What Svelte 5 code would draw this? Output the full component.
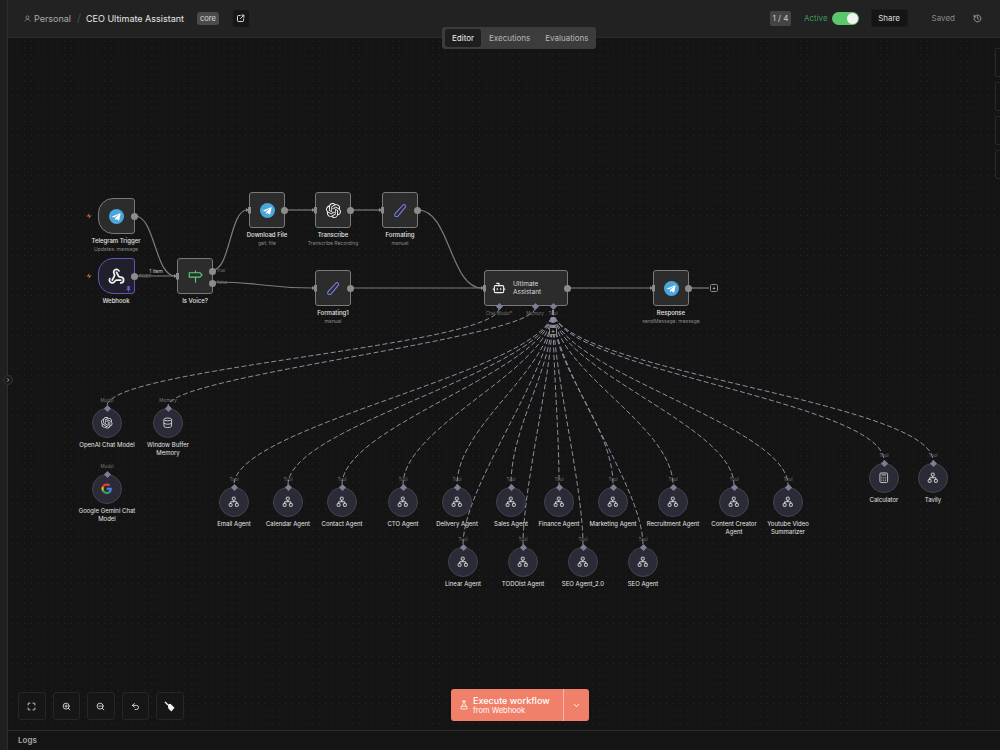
<script>
  // page coordinates of the canvas origin
  const ox = 8;
  const oy = 38;

  const squares = [
    { x: 249, y: 192, name: "Download File", sub: "get: file", icon: "telegram" },
    { x: 315, y: 192, name: "Transcribe", sub: "Transcribe Recording", icon: "openai" },
    { x: 382, y: 192, name: "Formating", sub: "manual", icon: "pen" },
    { x: 177, y: 258, name: "Is Voice?", sub: "", icon: "sign" },
    { x: 315, y: 270, name: "Formating1", sub: "manual", icon: "pen" },
    { x: 653, y: 270, name: "Response", sub: "sendMessage: message", icon: "telegram" },
  ];

  const circles = [
    { x: 107, y: 423, name: "OpenAI Chat Model", port: "Model", icon: "openai" },
    { x: 168, y: 423, name: "Window Buffer Memory", port: "Memory", icon: "db" },
    { x: 107, y: 489, name: "Google Gemini Chat Model", port: "Model", icon: "google" },
    { x: 234, y: 502, name: "Email Agent" },
    { x: 288, y: 502, name: "Calendar Agent" },
    { x: 342, y: 502, name: "Contact Agent" },
    { x: 403, y: 502, name: "CTO Agent" },
    { x: 457, y: 502, name: "Delivery Agent" },
    { x: 511, y: 502, name: "Sales Agent" },
    { x: 559, y: 502, name: "Finance Agent" },
    { x: 613, y: 502, name: "Marketing Agent" },
    { x: 673, y: 502, name: "Recruitment Agent" },
    { x: 734, y: 502, name: "Content Creator Agent" },
    { x: 788, y: 502, name: "Youtube Video Summarizer" },
    { x: 884, y: 478, name: "Calculator", icon: "calc" },
    { x: 933, y: 478, name: "Tavily" },
    { x: 463, y: 562, name: "Linear Agent" },
    { x: 523, y: 562, name: "TODOist Agent" },
    { x: 583, y: 562, name: "SEO Agent_2.0" },
    { x: 643, y: 562, name: "SEO Agent" },
  ];

  // main flow, horizontal beziers
  const links = [
    [135, 216, 175, 276],
    [135, 276, 175, 276],
    [213, 270, 247, 210],
    [213, 282, 313, 288],
    [285, 210, 313, 210],
    [351, 210, 380, 210],
    [418, 210, 482, 288],
    [351, 288, 482, 288],
    [568, 288, 651, 288],
    [689, 288, 709, 288],
  ];

  function hcurve([x1, y1, x2, y2]) {
    const k = Math.max(Math.abs(x2 - x1) * 0.5, 8);
    return `M${x1 - ox} ${y1 - oy}C${x1 + k - ox} ${y1 - oy} ${x2 - k - ox} ${y2 - oy} ${x2 - ox} ${y2 - oy}`;
  }

  function vcurve(x1, y1, x2, y2, k) {
    return `M${x1 - ox} ${y1 - oy}C${x1 - ox} ${y1 + k - oy} ${x2 - ox} ${y2 - k - oy} ${x2 - ox} ${y2 - oy}`;
  }

  const dashed = [
    vcurve(499, 308, 107, 406, 38),
    vcurve(535, 308, 168, 406, 30),
    ...circles.slice(3).map((c) => vcurve(553, 310, c.x, c.y - 17, 60)),
  ];

  const pos = (x, y) => `left:${x - ox}px;top:${y - oy}px`;
</script>

{#snippet icon(kind)}
  {#if kind === "telegram"}
    <svg viewBox="0 0 24 24" class="ic-lg">
      <circle cx="12" cy="12" r="12" fill="#4ba6dc" />
      <path d="M5 11.800 17.600 6.800c.6-.2 1.100.1.900.9l-2.100 10c-.2.7-.6.9-1.200.5l-3.200-2.400-1.600 1.500c-.2.2-.3.3-.7.3l.2-3.300 6-5.400c.3-.2-.1-.4-.4-.2l-7.400 4.700-3.200-1c-.7-.2-.7-.7.1-1z" fill="#fff" />
    </svg>
  {:else if kind === "openai"}
    <svg viewBox="0 0 24 24" class="ic-lg" fill="currentColor">
      <path d="M22.2819 9.8211a5.9847 5.9847 0 0 0-.5157-4.9108 6.0462 6.0462 0 0 0-6.5098-2.9A6.0651 6.0651 0 0 0 4.9807 4.1818a5.9847 5.9847 0 0 0-3.9977 2.9 6.0462 6.0462 0 0 0 .7427 7.0966 5.98 5.98 0 0 0 .511 4.9107 6.051 6.051 0 0 0 6.5146 2.9001A5.9847 5.9847 0 0 0 13.2599 24a6.0557 6.0557 0 0 0 5.7718-4.2058 5.9894 5.9894 0 0 0 3.9977-2.9001 6.0557 6.0557 0 0 0-.7475-7.0729zm-9.022 12.6081a4.4755 4.4755 0 0 1-2.8764-1.0408l.1419-.0804 4.7783-2.7582a.7948.7948 0 0 0 .3927-.6813v-6.7369l2.02 1.1686a.071.071 0 0 1 .038.052v5.5826a4.504 4.504 0 0 1-4.4945 4.4944zm-9.6607-4.1254a4.4708 4.4708 0 0 1-.5346-3.0137l.142.0852 4.783 2.7582a.7712.7712 0 0 0 .7806 0l5.8428-3.3685v2.3324a.0804.0804 0 0 1-.0332.0615L9.74 19.9502a4.4992 4.4992 0 0 1-6.1408-1.6464zM2.3408 7.8956a4.485 4.485 0 0 1 2.3655-1.9728V11.6a.7664.7664 0 0 0 .3879.6765l5.8144 3.3543-2.0201 1.1685a.0757.0757 0 0 1-.071 0l-4.8303-2.7865A4.504 4.504 0 0 1 2.3408 7.872zm16.5963 3.8558L13.1038 8.364 15.1192 7.2a.0757.0757 0 0 1 .071 0l4.8303 2.7913a4.4944 4.4944 0 0 1-.6765 8.1042v-5.6772a.79.79 0 0 0-.407-.667zm2.0107-3.0231l-.142-.0852-4.7735-2.7818a.7759.7759 0 0 0-.7854 0L9.409 9.2297V6.8974a.0662.0662 0 0 1 .0284-.0615l4.8303-2.7866a4.4992 4.4992 0 0 1 6.6802 4.66zM8.3065 12.863l-2.02-1.1638a.0804.0804 0 0 1-.038-.0567V6.0742a4.4992 4.4992 0 0 1 7.3757-3.4537l-.142.0805L8.704 5.459a.7948.7948 0 0 0-.3927.6813zm1.0976-2.3654l2.602-1.4998 2.6069 1.4998v2.9994l-2.5974 1.4997-2.6067-1.4997Z" />
    </svg>
  {:else if kind === "pen"}
    <svg viewBox="0 0 24 24" class="ic-lg" fill="none" stroke="#7a80e8" stroke-width="1.700" stroke-linejoin="round">
      <path d="M16.500 2.800c1.500-1 4.700 1.700 3.600 3.400L8 21c-1.400 1.200-4.500.8-5-.4-.5-1.100-.2-3 .7-4z" />
    </svg>
  {:else if kind === "sign"}
    <svg viewBox="0 0 24 24" class="ic-lg" fill="none" stroke="#55d17a" stroke-width="1.800" stroke-linejoin="round">
      <path d="M2 6h17l3.500 3.500L19 13H2z" />
      <path d="M12 2.500V6M12 13v9" />
    </svg>
  {:else if kind === "webhook"}
    <svg viewBox="0 0 24 24" class="ic-lg hook" fill="none" stroke="#f2f2f2" stroke-width="2.500" stroke-linecap="round" stroke-linejoin="round">
      <path d="M18 16.980h-5.990c-1.100 0-1.950.94-2.480 1.900A4 4 0 0 1 2 17c.01-.7.2-1.400.57-2" />
      <path d="m6 17 3.130-5.780c.53-.97.1-2.180-.5-3.100a4 4 0 1 1 6.890-4.060" />
      <path d="m12 6 3.130 5.730C15.660 12.700 16.900 13 18 13a4 4 0 0 1 0 8" />
    </svg>
  {:else if kind === "db"}
    <svg viewBox="0 0 24 24" class="ic-md" fill="none" stroke="currentColor" stroke-width="1.700">
      <ellipse cx="12" cy="5" rx="8" ry="3" />
      <path d="M4 5v14c0 1.700 3.600 3 8 3s8-1.300 8-3V5M4 12c0 1.700 3.600 3 8 3s8-1.300 8-3" />
    </svg>
  {:else if kind === "google"}
    <svg viewBox="0 0 24 24" class="ic-md">
      <path d="M22.500 12.300c0-.8-.1-1.500-.2-2.200H12v4.200h5.900c-.3 1.400-1 2.500-2.200 3.300v2.700h3.500c2.100-1.900 3.300-4.700 3.300-8z" fill="#4285f4" />
      <path d="M12 23c3 0 5.400-1 7.200-2.700l-3.500-2.700c-1 .7-2.200 1-3.700 1-2.900 0-5.300-1.900-6.200-4.500H2.200v2.800C4 20.500 7.700 23 12 23z" fill="#34a853" />
      <path d="M5.800 14.100c-.2-.7-.3-1.400-.3-2.100s.1-1.400.3-2.100V7.100H2.200C1.400 8.500 1 10.200 1 12s.4 3.500 1.200 4.900z" fill="#fbbc05" />
      <path d="M12 5.400c1.600 0 3 .5 4.200 1.600l3.100-3.100C17.400 2.100 15 1 12 1 7.700 1 4 3.500 2.200 7.100l3.600 2.800C6.700 7.300 9.100 5.400 12 5.400z" fill="#ea4335" />
    </svg>
  {:else if kind === "calc"}
    <svg viewBox="0 0 24 24" class="ic-md" fill="none" stroke="currentColor" stroke-width="1.700">
      <rect x="4" y="2" width="16" height="20" rx="2.500" />
      <path d="M8 6h8M8 11h.01M12 11h.01M16 11h.01M8 14.500h.01M12 14.500h.01M16 14.500h.01M8 18h.01M12 18h.01M16 18h.01" stroke-linecap="round" />
    </svg>
  {:else}
    <svg viewBox="0 0 24 24" class="ic-md" fill="none" stroke="currentColor" stroke-width="1.800" stroke-linejoin="round">
      <rect x="9" y="2.500" width="6" height="6" rx="1" />
      <rect x="2.500" y="15.500" width="6" height="6" rx="1" />
      <rect x="15.500" y="15.500" width="6" height="6" rx="1" />
      <path d="M12 8.500V12M5.500 15.500V12h13v3.500" />
    </svg>
  {/if}
{/snippet}

<div class="app">
  <aside class="rail"></aside>
  <button class="collapse" aria-label="Expand sidebar">
    <svg viewBox="0 0 10 10"><path d="M4 3l2 2-2 2" fill="none" stroke="currentColor" stroke-width="1" /></svg>
  </button>

  <div class="main">
    <header class="top">
      <div class="crumbs">
        <svg class="user" viewBox="0 0 24 24" fill="none" stroke="currentColor" stroke-width="2.500"><circle cx="12" cy="8" r="5" /><path d="M3 22c1-5 4.500-7 9-7s8 2 9 7" /></svg>
        <span class="personal">Personal</span>
        <span class="slash">/</span>
        <span class="title">CEO Ultimate Assistant</span>
        <span class="tag">core</span>
        <button class="add-tag" aria-label="Open in new tab">
          <svg viewBox="0 0 24 24" fill="none" stroke="currentColor" stroke-width="2.600" stroke-linecap="round" stroke-linejoin="round"><path d="M11 4H6a2 2 0 0 0-2 2v12a2 2 0 0 0 2 2h12a2 2 0 0 0 2-2v-5" /><path d="M15 3h6v6M21 3l-9 9" /></svg>
        </button>
      </div>
      <div class="actions">
        <span class="pager">1 / 4</span>
        <span class="active">Active</span>
        <span class="toggle"><span class="knob"></span></span>
        <button class="share">Share</button>
        <span class="saved">Saved</span>
        <svg class="history" viewBox="0 0 24 24" fill="none" stroke="currentColor" stroke-width="2.200" stroke-linecap="round" stroke-linejoin="round"><path d="M3 12a9 9 0 1 0 3-6.700L3 8" /><path d="M3 3v5h5M12 7v5l3.500 2" /></svg>
      </div>
    </header>

    <div class="canvas">
      <div class="tabs">
        <span class="tab on">Editor</span>
        <span class="tab">Executions</span>
        <span class="tab">Evaluations</span>
      </div>

      <div class="edge-boxes">
        <span></span>
        <span></span>
        <span></span>
        <span></span>
      </div>

      <svg class="wires" width="992" height="692">
        {#each dashed as d}
          <path {d} class="dash" />
        {/each}
        {#each links as l}
          <path d={hcurve(l)} class="wire" />
        {/each}
      </svg>

      <!-- triggers -->
      <div class="node trigger" style={pos(98, 198)}>
        {@render icon("telegram")}
        <span class="out"></span>
      </div>
      <div class="label" style={pos(116, 237)}>
        <b>Telegram Trigger</b>
        <small>Updates: message</small>
      </div>
      <svg class="bolt" style={pos(86, 212)} viewBox="0 0 10 10"><path d="M6 0 4.500 4H9L4 10l1.500-4H1z" fill="#e8654f" /></svg>

      <div class="node trigger pinned" style={pos(98, 258)}>
        {@render icon("webhook")}
        <span class="out"></span>
        <svg class="pin" viewBox="0 0 10 12"><path d="M2.500 0h5v1.500L7 5l2 2v1H5.700v4h-1.400V8H1V7l2-2-.5-3.500z" fill="#6f5ee0" /></svg>
      </div>
      <div class="label" style={pos(116, 297)}><b>Webhook</b></div>
      <svg class="bolt" style={pos(86, 272)} viewBox="0 0 10 10"><path d="M6 0 4.500 4H9L4 10l1.500-4H1z" fill="#e8654f" /></svg>

      <span class="wire-note" style={pos(156, 268)}>1 item</span>
      <span class="port-note" style={pos(139, 274)}>POST</span>

      {#each squares as n}
        <div class="node" style={pos(n.x, n.y)}>
          {@render icon(n.icon)}
          <span class="in"></span>
          {#if n.name === "Is Voice?"}
            <span class="out t"></span>
            <span class="out f"></span>
          {:else}
            <span class="out"></span>
          {/if}
        </div>
        <div class="label" style={pos(n.x + 18, n.y + 39)}>
          <b>{n.name}</b>
          {#if n.sub}<small>{n.sub}</small>{/if}
        </div>
      {/each}

      <span class="port-note" style={pos(217, 268)}>true</span>
      <span class="port-note" style={pos(217, 280)}>false</span>

      <!-- agent -->
      <div class="node agent" style={pos(484, 270)}>
        <svg class="robot" viewBox="0 0 24 24" fill="none" stroke="#f2f2f2" stroke-width="1.900" stroke-linecap="round" stroke-linejoin="round">
          <path d="M12 8V4H8" />
          <rect x="4" y="8" width="16" height="12" rx="2" />
          <path d="M2 14h2M20 14h2M15 13v2M9 13v2" />
        </svg>
        <span class="agent-name">Ultimate<br />Assistant</span>
        <span class="in"></span>
        <span class="out"></span>
      </div>
      <span class="diamond" style={pos(499, 306)}></span>
      <span class="diamond" style={pos(535, 306)}></span>
      <span class="diamond" style={pos(553, 306)}></span>
      <span class="sub-port" style={pos(499, 313)}>Chat Model<i>*</i></span>
      <span class="sub-port" style={pos(535, 313)}>Memory</span>
      <span class="sub-port" style={pos(553, 313)}>Tool</span>
      <span class="plus" style={pos(553, 331)}>+</span>
      <span class="plus" style={pos(714, 288)}>+</span>

      {#each circles as c}
        <span class="sub-port" style={pos(c.x, c.y - 23)}>{c.port ?? "Tool"}</span>
        <div class="round" style={pos(c.x - 15, c.y - 15)}>
          {@render icon(c.icon ?? "agent")}
        </div>
        <span class="diamond" style={pos(c.x, c.y - 15)}></span>
        <div class="label round-label" style={pos(c.x, c.y + 18)}>{c.name}</div>
      {/each}

      <!-- zoom tools -->
      <div class="tools">
        <button aria-label="Fit view">
          <svg viewBox="0 0 24 24" fill="none" stroke="currentColor" stroke-width="2.400" stroke-linecap="round"><path d="M3 8V5a2 2 0 0 1 2-2h3M16 3h3a2 2 0 0 1 2 2v3M21 16v3a2 2 0 0 1-2 2h-3M8 21H5a2 2 0 0 1-2-2v-3" /></svg>
        </button>
        <button aria-label="Zoom in">
          <svg viewBox="0 0 24 24" fill="none" stroke="currentColor" stroke-width="2.400" stroke-linecap="round"><circle cx="11" cy="11" r="8" /><path d="m21 21-4.300-4.300M11 8v6M8 11h6" /></svg>
        </button>
        <button aria-label="Zoom out">
          <svg viewBox="0 0 24 24" fill="none" stroke="currentColor" stroke-width="2.400" stroke-linecap="round"><circle cx="11" cy="11" r="8" /><path d="m21 21-4.300-4.300M8 11h6" /></svg>
        </button>
        <button aria-label="Undo">
          <svg viewBox="0 0 24 24" fill="none" stroke="currentColor" stroke-width="2.400" stroke-linecap="round" stroke-linejoin="round"><path d="M9 14 4 9l5-5" /><path d="M4 9h10.500a5.500 5.500 0 0 1 0 11H11" /></svg>
        </button>
        <button class="broom" aria-label="Tidy up">
          <svg viewBox="0 0 24 24" fill="#f2f2f2"><path d="M1 2.500 3.500 1l6 6.500-2.500 2zM8 7.500l6-1.500 9 8.500-7 8.500-6.500-6.500z" /></svg>
        </button>
      </div>

      <div class="run">
        <button class="run-main">
          <svg viewBox="0 0 24 24" fill="none" stroke="currentColor" stroke-width="2" stroke-linecap="round" stroke-linejoin="round"><path d="M9 2.500h6M10 2.500V9l-5.500 9.500A2 2 0 0 0 6.200 21.500h11.600a2 2 0 0 0 1.700-3L14 9V2.500M7.500 15h9" /></svg>
          <span class="run-text"><b>Execute workflow</b><small>from Webhook</small></span>
        </button>
        <button class="run-more" aria-label="More">
          <svg viewBox="0 0 24 24" fill="none" stroke="currentColor" stroke-width="2.600" stroke-linecap="round" stroke-linejoin="round"><path d="m6 9 6 6 6-6" /></svg>
        </button>
      </div>
    </div>

    <footer class="logs">Logs</footer>
  </div>
</div>

<style>
  :global(body) {
    margin: 0;
    background: #141414;
    font-family: Inter, "Liberation Sans", sans-serif;
  }

  button {
    font-family: inherit;
    padding: 0;
    cursor: pointer;
  }

  .app {
    position: relative;
    display: flex;
    width: 1000px;
    height: 750px;
    overflow: hidden;
    color: #e8e8e8;
  }

  .rail {
    width: 7px;
    flex: none;
    background: #1f1f1f;
    border-right: 1px solid #2c2c2c;
  }

  .collapse {
    position: absolute;
    left: 3px;
    top: 375px;
    z-index: 3;
    width: 10px;
    height: 10px;
    border: 1px solid #333;
    border-radius: 50%;
    background: #1c1c1c;
    color: #bbb;
    box-sizing: border-box;
    display: flex;
  }

  .collapse svg {
    width: 100%;
    height: 100%;
  }

  .main {
    flex: 1;
    display: flex;
    flex-direction: column;
    min-width: 0;
  }

  .top {
    height: 38px;
    flex: none;
    display: flex;
    align-items: center;
    justify-content: space-between;
    background: #222;
    border-bottom: 1px solid #2c2c2c;
    padding: 0 18px 1px 16px;
    box-sizing: border-box;
  }

  .crumbs,
  .actions {
    display: flex;
    align-items: center;
  }

  .user {
    width: 7px;
    height: 7px;
    color: #999;
    margin-right: 3px;
  }

  .personal {
    font-size: 9px;
    color: #aaa;
  }

  .slash {
    margin: 0 5px 0 6px;
    font-size: 11px;
    color: #4a4a4a;
  }

  .title {
    font-size: 9px;
    font-weight: 400;
    color: #e6e6e6;
  }

  .tag {
    margin-left: 13px;
    padding: 2px 3px;
    border-radius: 3px;
    background: #4a4a4a;
    color: #ddd;
    font-size: 7.500px;
    line-height: 9px;
  }

  .add-tag {
    margin-left: 14px;
    width: 16px;
    height: 17px;
    border: 0;
    border-radius: 3px;
    background: #161616;
    color: #ddd;
    display: flex;
    align-items: center;
    justify-content: center;
  }

  .add-tag svg {
    width: 9px;
    height: 9px;
  }

  .pager {
    width: 21px;
    height: 15px;
    line-height: 15px;
    text-align: center;
    border-radius: 2px;
    background: #444;
    color: #ccc;
    font-size: 8px;
    font-weight: 400;
  }

  .active {
    margin-left: 13px;
    font-size: 8px;
    font-weight: 400;
    color: #3f9a55;
  }

  .toggle {
    margin-left: 4px;
    width: 27px;
    height: 13px;
    border-radius: 7px;
    background: #5cc66d;
    display: flex;
    justify-content: flex-end;
    align-items: center;
    padding: 0 1px;
    box-sizing: border-box;
  }

  .knob {
    width: 11px;
    height: 11px;
    border-radius: 50%;
    background: #f2f2f2;
  }

  .share {
    margin-left: 12px;
    width: 37px;
    height: 18px;
    border: 1px solid #1b1b1b;
    border-radius: 2px;
    background: #151515;
    color: #ddd;
    font-size: 8px;
    font-weight: 400;
  }

  .saved {
    margin-left: 24px;
    font-size: 8px;
    font-weight: 400;
    color: #888;
  }

  .history {
    margin-left: 18px;
    width: 9px;
    height: 9px;
    color: #aaa;
  }

  .canvas {
    position: relative;
    flex: 1;
    min-height: 0;
    background-color: #141414;
    background-image: radial-gradient(circle, #2b2b2b 0.55px, transparent 0.8px);
    background-size: 6.7px 6.7px;
  }

  .tabs {
    position: absolute;
    top: -11px;
    left: 434px;
    z-index: 2;
    display: flex;
    gap: 1px;
    height: 22px;
    padding: 2px 1px 2px 3px;
    box-sizing: border-box;
    border-radius: 3px;
    background: #3c3c3c;
  }

  .tab {
    padding: 0 7px;
    font-size: 8px;
    line-height: 18px;
    color: #b8b8b8;
    font-weight: 400;
  }

  .tab.on {
    background: #1e1e1e;
    border-radius: 3px;
    color: #eee;
  }

  .edge-boxes {
    position: absolute;
    right: -6px;
    top: 10px;
    display: flex;
    flex-direction: column;
    gap: 5px;
  }

  .edge-boxes span {
    width: 9px;
    height: 27px;
    border: 1px solid #282828;
    border-radius: 2px;
  }

  .wires {
    position: absolute;
    left: 0;
    top: 0;
    pointer-events: none;
  }

  .wire {
    fill: none;
    stroke: #7c7c7c;
    stroke-width: 1.200;
  }

  .dash {
    fill: none;
    stroke: #8e8ea2;
    stroke-width: 1;
    stroke-dasharray: 5 2.500;
  }

  .node {
    position: absolute;
    width: 36px;
    height: 36px;
    box-sizing: border-box;
    border: 1px solid #7a7a7a;
    border-radius: 3px;
    background: #2c2c2c;
    color: #f2f2f2;
    display: flex;
    align-items: center;
    justify-content: center;
  }

  .trigger {
    width: 37px;
    border-radius: 15px 3px 3px 15px;
  }

  .pinned {
    border-color: #6155b8;
    background: #20202c;
  }

  .in {
    position: absolute;
    left: -4px;
    top: 50%;
    width: 5px;
    height: 7px;
    margin-top: -3.500px;
    background: #8a8a8a;
    clip-path: polygon(0 20%, 40% 40%, 40% 0, 100% 0, 100% 100%, 40% 100%, 40% 60%, 0 80%);
  }

  .out {
    position: absolute;
    right: -4px;
    top: 50%;
    width: 7px;
    height: 7px;
    margin-top: -3.500px;
    border-radius: 50%;
    background: #8c8c8c;
  }

  .out.t {
    top: 12px;
  }

  .out.f {
    top: 24px;
  }

  .pin {
    position: absolute;
    right: 3px;
    bottom: 1px;
    width: 5px;
    height: 6px;
  }

  .bolt {
    position: absolute;
    width: 6px;
    height: 8px;
  }

  .ic-lg {
    width: 15px;
    height: 15px;
  }

  .ic-lg.hook {
    width: 17px;
    height: 17px;
  }

  .ic-md {
    width: 11px;
    height: 11px;
    color: #e8e8e8;
  }

  .label {
    position: absolute;
    width: 64px;
    margin-left: -32px;
    display: flex;
    flex-direction: column;
    align-items: center;
    text-align: center;
    color: #e4e4e4;
    font-size: 6px;
    line-height: 8px;
  }

  .label b {
    font-weight: 500;
    white-space: nowrap;
  }

  .label small {
    margin-top: 1px;
    font-size: 5px;
    line-height: 7px;
    color: #8a8a8a;
    white-space: nowrap;
  }

  .round-label {
    width: 60px;
    margin-left: -30px;
    font-weight: 400;
  }

  .wire-note {
    position: absolute;
    font-size: 5px;
    line-height: 6px;
    color: #ccc;
    transform: translateX(-50%);
  }

  .port-note {
    position: absolute;
    font-size: 4.500px;
    line-height: 5px;
    color: #777;
  }

  .agent {
    width: 84px;
    justify-content: flex-start;
    padding-left: 7px;
    gap: 7px;
  }

  .robot {
    width: 14px;
    height: 14px;
    flex: none;
  }

  .agent-name {
    font-size: 6.500px;
    line-height: 8px;
    color: #ddd;
  }

  .diamond {
    position: absolute;
    z-index: 1;
    width: 5px;
    height: 5px;
    margin: -2.500px 0 0 -2.500px;
    background: #7d7d96;
    transform: rotate(45deg);
  }

  .sub-port {
    position: absolute;
    transform: translate(-50%, -50%);
    font-size: 4.500px;
    line-height: 5px;
    color: #777;
    white-space: nowrap;
  }

  .sub-port i {
    color: #e8654f;
    font-style: normal;
  }

  .plus {
    position: absolute;
    z-index: 1;
    width: 8px;
    height: 8px;
    margin: -4px 0 0 -4px;
    border: 1px solid #8a8a8a;
    border-radius: 1.500px;
    background: #141414;
    box-sizing: border-box;
    color: #ccc;
    font-size: 6px;
    line-height: 6px;
    text-align: center;
  }

  .round {
    position: absolute;
    width: 30px;
    height: 30px;
    box-sizing: border-box;
    border: 1px solid #44444f;
    border-radius: 50%;
    background: #2b2b38;
    color: #e8e8e8;
    display: flex;
    align-items: center;
    justify-content: center;
  }

  .round svg {
    width: 11.500px;
    height: 11.500px;
  }

  .tools {
    position: absolute;
    left: 10px;
    bottom: 10px;
    display: flex;
    gap: 7px;
  }

  .tools button {
    width: 27.500px;
    height: 28px;
    border: 1px solid #262626;
    border-radius: 3px;
    background: #161616;
    color: #ddd;
    display: flex;
    align-items: center;
    justify-content: center;
  }

  .tools svg {
    width: 9px;
    height: 9px;
  }

  .tools .broom svg {
    width: 11px;
    height: 11px;
  }

  .run {
    position: absolute;
    left: 443px;
    bottom: 9px;
    display: flex;
    width: 138px;
    height: 32px;
    border-radius: 3px;
    overflow: hidden;
    background: #f0806a;
    color: #fff;
  }

  .run button {
    border: 0;
    background: none;
    color: inherit;
    display: flex;
    align-items: center;
  }

  .run-main {
    width: 112px;
    padding-left: 8px;
    gap: 4px;
    text-align: left;
  }

  .run-main svg {
    width: 10px;
    height: 10px;
    flex: none;
  }

  .run-text {
    display: flex;
    flex-direction: column;
  }

  .run-text b {
    font-size: 9px;
    line-height: 11px;
    font-weight: 500;
  }

  .run-text small {
    font-size: 7.500px;
    line-height: 9px;
  }

  .run .run-more {
    flex: 1;
    justify-content: center;
    border-left: 1px solid #f7b9ac;
  }

  .run-more svg {
    width: 9px;
    height: 9px;
  }

  .logs {
    height: 20px;
    flex: none;
    box-sizing: border-box;
    border-top: 1px solid #2c2c2c;
    background: #141414;
    padding-left: 10px;
    font-size: 8px;
    font-weight: 600;
    line-height: 19px;
    color: #aaa;
  }
</style>
